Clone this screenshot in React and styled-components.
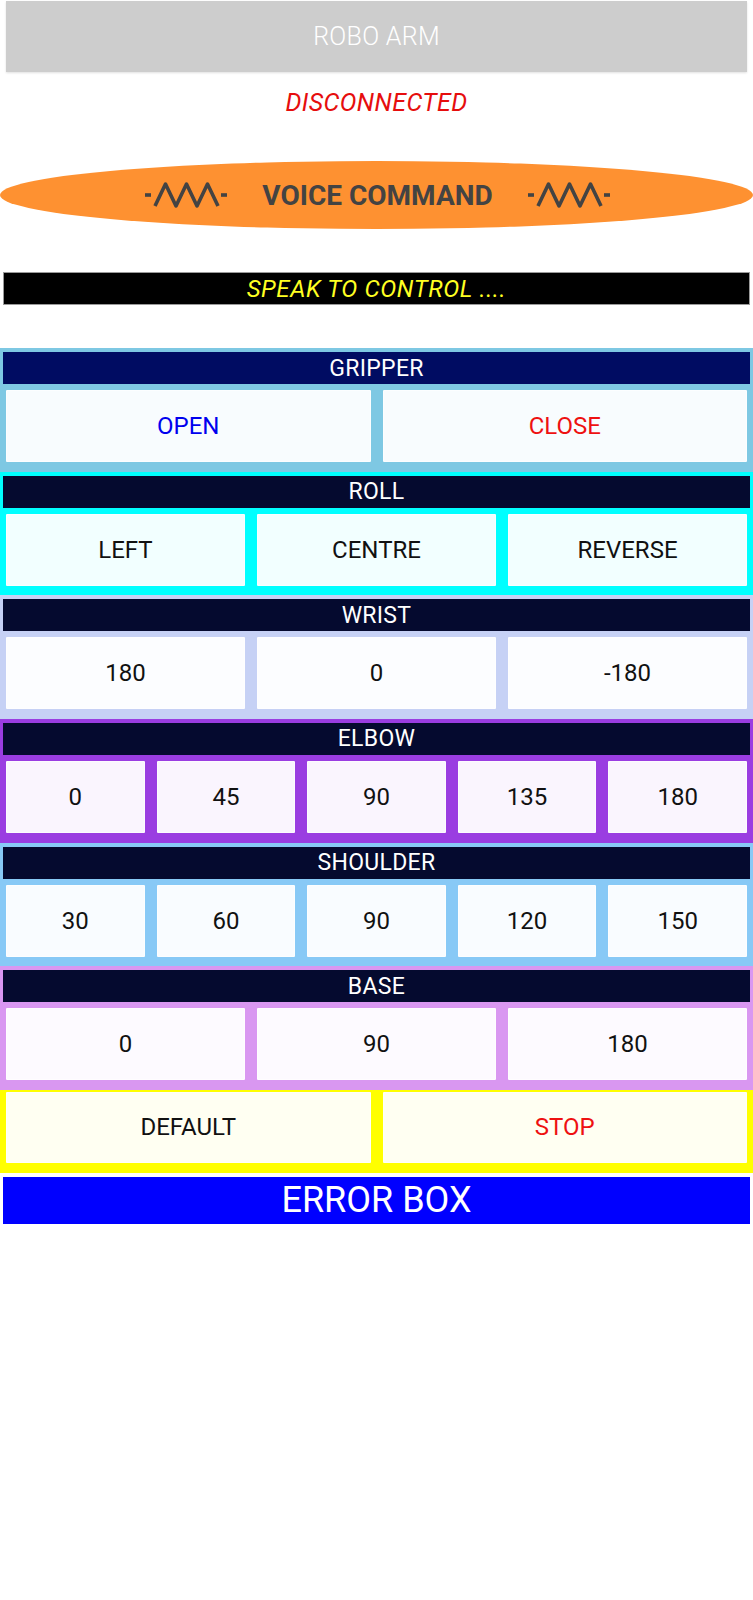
import React from 'react';
import styled, { createGlobalStyle } from 'styled-components';

const sections = [
    { title: 'GRIPPER', bg: '#7ec8e3', head: '#000c62', items: [{ label: 'OPEN', color: '#0000ee' }, { label: 'CLOSE', color: '#ee1111' }] },
    { title: 'ROLL', bg: '#00ffff', items: [{ label: 'LEFT' }, { label: 'CENTRE' }, { label: 'REVERSE' }] },
    { title: 'WRIST', bg: '#c6d1f5', items: [{ label: '180' }, { label: '0' }, { label: '-180' }] },
    { title: 'ELBOW', bg: '#9a3de1', items: [{ label: '0' }, { label: '45' }, { label: '90' }, { label: '135' }, { label: '180' }] },
    { title: 'SHOULDER', bg: '#88c9f6', items: [{ label: '30' }, { label: '60' }, { label: '90' }, { label: '120' }, { label: '150' }] },
    { title: 'BASE', bg: '#d997f1', items: [{ label: '0' }, { label: '90' }, { label: '180' }] },
];

// the little "-/\/\/\-" squiggle either side of the voice label
const Wave = () => (
    <svg width="84" height="26" viewBox="0 0 84 26">
        <g fill="none" stroke="#434343" strokeWidth="3.6" strokeLinejoin="round">
            <line x1="1" y1="13" x2="7" y2="13" />
            <polyline points="11,24 21.5,2 32,24 42.5,2 53,24 63.5,2 74,24" />
            <line x1="77" y1="13" x2="83" y2="13" />
        </g>
    </svg>
);

const App = () => {
    return (
        <>
            <GlobalStyle />
            <Page>
                <TitleBar>ROBO ARM</TitleBar>
                <Status>DISCONNECTED</Status>
                <VoiceButton>
                    <Wave />
                    <VoiceLabel>VOICE COMMAND</VoiceLabel>
                    <Wave />
                </VoiceButton>
                <SpeakBar>SPEAK TO CONTROL ....</SpeakBar>

                <Panel>
                    {sections.map((s) => (
                        <Section key={s.title} $bg={s.bg}>
                            <SectionHead $bg={s.head}>{s.title}</SectionHead>
                            <ButtonRow $cols={s.items.length}>
                                {s.items.map((it, i) => (
                                    <CtrlButton key={i} $color={it.color}>{it.label}</CtrlButton>
                                ))}
                            </ButtonRow>
                        </Section>
                    ))}
                    <BottomSection>
                        <ButtonRow $cols={2} $flat>
                            <CtrlButton $h={71}>DEFAULT</CtrlButton>
                            <CtrlButton $h={71} $color="#ee1111">STOP</CtrlButton>
                        </ButtonRow>
                    </BottomSection>
                </Panel>

                <ErrorBox>ERROR BOX</ErrorBox>
            </Page>
        </>
    );
};

export default App;

const GlobalStyle = createGlobalStyle`
  body {
    margin: 0;
    background: #ffffff;
    font-family: Roboto, "Liberation Sans", sans-serif;
  }
`;

const Page = styled.div`
  display: flex;
  flex-direction: column;
  width: 753px;
  min-height: 1600px;
`;

const TitleBar = styled.div`
  margin: 1px 6px 0;
  height: 71px;
  display: flex;
  align-items: center;
  justify-content: center;
  background: #cdcdcd;
  box-shadow: 0 1px 2px rgba(0, 0, 0, 0.12);
  color: #ffffff;
  font-size: 25px;
  font-weight: 300;
  letter-spacing: 0.3px;
`;

const Status = styled.div`
  margin-top: 16px;
  height: 30px;
  line-height: 30px;
  text-align: center;
  color: #e60d0d;
  font-size: 25px;
  font-style: italic;
  letter-spacing: 0.4px;
`;

const VoiceButton = styled.div`
  margin-top: 43px;
  height: 68px;
  border-radius: 50%;
  background: #fe9131;
  display: flex;
  align-items: center;
  justify-content: center;
  gap: 34px;
  padding-left: 2px;
`;

const VoiceLabel = styled.span`
  color: #434343;
  font-size: 28px;
  font-weight: 700;
`;

const SpeakBar = styled.div`
  margin: 43px 3px 0;
  height: 31px;
  border: 1px solid #9a9a9a;
  background: #000000;
  color: #ffff22;
  font-size: 24px;
  font-style: italic;
  letter-spacing: 0.6px;
  display: flex;
  align-items: center;
  justify-content: center;
`;

const Panel = styled.div`
  margin-top: 43px;
  display: flex;
  flex-direction: column;
`;

const Section = styled.div`
  background: ${(p) => p.$bg};
  padding: 4px 3px 3.67px;
`;

const SectionHead = styled.div`
  height: 32px;
  background: ${(p) => p.$bg || '#050a2f'};
  color: #ffffff;
  font-size: 23px;
  letter-spacing: 0.3px;
  display: flex;
  align-items: center;
  justify-content: center;
`;

const ButtonRow = styled.div`
  display: grid;
  grid-template-columns: repeat(${(p) => p.$cols}, 1fr);
  gap: 12px;
  padding: ${(p) => (p.$flat ? '0' : '6px 3px')};
`;

const CtrlButton = styled.div`
  height: ${(p) => p.$h || 72}px;
  box-sizing: border-box;
  background: rgba(255, 255, 255, 0.95);
  border: 1px solid rgba(255, 255, 255, 0.6);
  border-radius: 1px;
  color: ${(p) => p.$color || '#111111'};
  font-size: 24px;
  display: flex;
  align-items: center;
  justify-content: center;
`;

const BottomSection = styled.div`
  background: #ffff00;
  padding: 2px 6px 10px;
`;

const ErrorBox = styled.div`
  margin: 4px 3px 0;
  height: 47px;
  background: #0000ff;
  color: #ffffff;
  font-size: 36px;
  display: flex;
  align-items: center;
  justify-content: center;
`;
